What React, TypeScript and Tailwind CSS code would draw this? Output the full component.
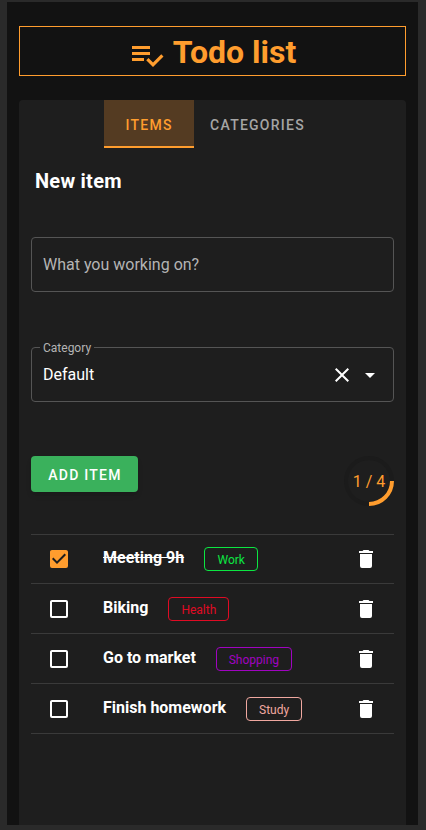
import React from 'react';

const icons = {
  playlist:
    'M14 10H2v2h12v-2zm0-4H2v2h12V6zM2 16h8v-2H2v2zm19.5-4.5L23 13l-6.99 7-4.51-4.5L13 14l3.01 3 5.49-5.5z',
  close:
    'M19 6.41L17.59 5 12 10.59 6.41 5 5 6.41 10.59 12 5 17.59 6.41 19 12 13.41 17.59 19 19 17.59 13.41 12z',
  menuDown: 'M7,10L12,15L17,10H7Z',
  checked:
    'M10,17L5,12L6.41,10.58L10,14.17L17.59,6.58L19,8M19,3H5C3.89,3 3,3.89 3,5V19A2,2 0 0,0 5,21H19A2,2 0 0,0 21,19V5C21,3.89 20.1,3 19,3Z',
  unchecked:
    'M19,3H5C3.89,3 3,3.89 3,5V19A2,2 0 0,0 5,21H19A2,2 0 0,0 21,19V5C21,3.89 20.1,3 19,3M19,5V19H5V5H19Z',
  trash: 'M19,4H15.5L14.5,3H9.5L8.5,4H5V6H19M6,19A2,2 0 0,0 8,21H16A2,2 0 0,0 18,19V7H6V19Z',
};

function Icon({ name, className }: { name: keyof typeof icons; className: string }) {
  return (
    <svg viewBox="0 0 24 24" fill="currentColor" className={`shrink-0 ${className}`}>
      <path d={icons[name]} />
    </svg>
  );
}

const items = [
  { title: 'Meeting 9h', tag: 'Work', color: 'border-[#0ce642] text-[#0ce642]', width: 'w-[54px]', done: true },
  { title: 'Biking', tag: 'Health', color: 'border-[#e00b24] text-[#e00b24]', width: 'w-[61px]', done: false },
  { title: 'Go to market', tag: 'Shopping', color: 'border-[#a004c0] text-[#a004c0]', width: 'w-[76px]', done: false },
  { title: 'Finish homework', tag: 'Study', color: 'border-[#f0a8a0] text-[#f0a8a0]', width: 'w-[56px]', done: false },
];

export default function App() {
  return (
    <div className="h-[830px] w-full overflow-hidden bg-[#2a2a2a] pt-[2px] pr-2 pl-[7px] font-[Roboto,sans-serif] text-white">
      <main className="flex h-[823px] flex-col bg-[#121212] px-3 pt-6">
        <header className="flex h-[50px] shrink-0 items-center justify-center border border-[#ff9d2e] text-[#ff9d2e]">
          <Icon name="playlist" className="mt-[7px] mr-2 size-9" />
          <h1 className="pt-0.5 text-[32px] leading-[46px] font-bold">Todo list</h1>
        </header>

        <section className="mt-6 flex-1 rounded-t bg-[#1e1e1e]">
          <nav className="flex h-12 justify-center text-sm font-medium tracking-[0.0892857em]">
            <button className="w-[90px] border-b-2 border-[#ff9d2e] bg-[#543b22] pt-1 text-[#ff9d2e]">ITEMS</button>
            <button className="px-4 pt-0.5 text-[#a5a5a5]">CATEGORIES</button>
          </nav>

          <div className="px-3">
            <h2 className="px-1 pt-[17px] text-xl leading-8 font-bold tracking-[0.0125em]">New item</h2>

            <div className="mt-10 flex h-[55px] items-center rounded border border-[#555] px-[11px] text-[#b4b4b4]">
              What you working on?
            </div>

            <fieldset className="mt-[47px] h-[63px] rounded border border-[#555] pr-[11px] pl-[8px]">
              <legend className="h-[16px] px-[3px] pt-px text-xs leading-4 text-[#b4b4b4]">Category</legend>
              <div className="flex h-[38px] items-center pl-[3px]">
                <span className="flex-1 pt-0.5">Default</span>
                <Icon name="close" className="mt-0.5 mr-1 size-6" />
                <Icon name="menuDown" className="mt-0.5 size-6" />
              </div>
            </fieldset>

            <div className="mt-[54px] flex items-start justify-between">
              <button className="h-9 w-[107px] rounded bg-[#3ab15c] pt-0.5 pl-px text-sm font-medium tracking-[0.0892857em] shadow-md">
                ADD ITEM
              </button>
              <div className="grid size-[50px] place-items-center text-base text-[#ff9d2e]">
                <svg viewBox="0 0 50 50" fill="none" strokeWidth="4" className="col-start-1 row-start-1 size-[50px]">
                  <circle cx="25" cy="25" r="23" stroke="#1b1b1b" />
                  <path d="M48 25A23 23 0 0 1 25 48" stroke="#ff9d2e" />
                </svg>
                <span className="col-start-1 row-start-1 pt-0.5">1 / 4</span>
              </div>
            </div>

            <ul className="mt-7 border-t border-[#3a3a3a]">
              {items.map((item) => (
                <li
                  key={item.title}
                  className="flex h-[50px] items-start border-b border-[#3a3a3a] pt-[13px] pr-4 pl-4 first:h-[49px] first:pt-3"
                >
                  <Icon
                    name={item.done ? 'checked' : 'unchecked'}
                    className={item.done ? 'size-6 text-[#ff9d2e]' : 'size-6'}
                  />
                  <span className={`ml-8 -mt-px leading-6 font-bold ${item.done ? 'line-through' : ''}`}>
                    {item.title}
                  </span>
                  <span
                    className={`ml-5 flex h-6 items-center justify-center rounded border pt-0.5 text-xs ${item.width} ${item.color}`}
                  >
                    {item.tag}
                  </span>
                  <Icon name="trash" className="ml-auto size-6" />
                </li>
              ))}
            </ul>
          </div>
        </section>
      </main>
    </div>
  );
}
